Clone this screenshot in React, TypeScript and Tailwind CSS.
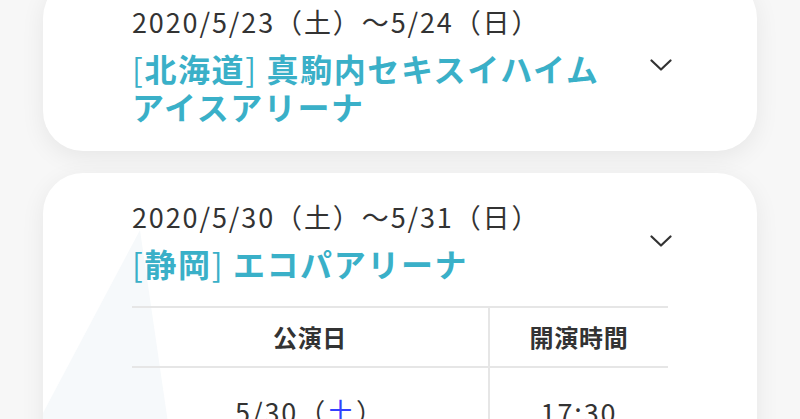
const FONT = "font-['Noto_Sans_CJK_JP','Noto_Sans',sans-serif]"

type Venue = {
  dates: string
  pref: string
  name: string
  rows?: { day: string; dow: string; time: string }[]
}

const VENUES: Venue[] = [
  { dates: '2020/5/23（土）〜5/24（日）', pref: '北海道', name: '真駒内セキスイハイムアイスアリーナ' },
  {
    dates: '2020/5/30（土）〜5/31（日）',
    pref: '静岡',
    name: 'エコパアリーナ',
    rows: [{ day: '5/30', dow: '土', time: '17:30' }],
  },
]

function Chevron() {
  return (
    <svg width="22" height="12" viewBox="0 0 22 12" fill="none" stroke="#333" strokeWidth="2.2" strokeLinecap="round" strokeLinejoin="round">
      <polyline points="1.5,1.5 11,10.5 20.5,1.5" />
    </svg>
  )
}

function VenueCard({ v }: { v: Venue }) {
  return (
    <div className="relative overflow-hidden rounded-[40px] bg-white pl-[89px] pr-[85px] pt-[26px] pb-[26px] shadow-[0_6px_24px_rgba(0,0,0,0.07)]">
      {/* faint watermark behind the table */}
      {v.rows && (
        <svg className="pointer-events-none absolute left-0 top-[50px]" width="200" height="300" viewBox="0 0 200 300">
          <polygon points="97,7 0,190 0,300 150,300 125,200" fill="#f6f9fb" />
        </svg>
      )}
      <div className="relative flex items-center">
        <div className="flex-1">
          <p className="text-[27px] leading-[36px] tracking-[0.07em] text-[#333]">{v.dates}</p>
          <p className="mt-[9px] text-[32px] font-bold leading-[38px] tracking-[0.05em] text-[#3ab0c8]">
            <span className="font-normal">[</span>
            {v.pref}
            <span className="font-normal">]</span> {v.name}
          </p>
        </div>
        <div className="ml-[28px] flex w-[22px] justify-center">
          <Chevron />
        </div>
      </div>
      {v.rows && (
        <table className="relative mt-[24px] w-[536px] border-collapse">
          <thead>
            <tr className="border-y-2 border-[#e6e6e6]">
              <th className="h-[60px] w-[357px] border-r-2 border-[#e6e6e6] text-[24px] font-bold tracking-[0.03em] text-[#333]">公演日</th>
              <th className="h-[60px] text-[24px] font-bold tracking-[0.03em] text-[#333]">開演時間</th>
            </tr>
          </thead>
          <tbody>
            {v.rows.map(r => (
              <tr key={r.day} className="border-b-2 border-[#e6e6e6]">
                <td className="h-[90px] border-r-2 border-[#e6e6e6] text-center text-[27px] tracking-[0.07em] text-[#333]">
                  {r.day}（<span className="text-[#3340ff]">{r.dow}</span>）
                </td>
                <td className="h-[90px] text-center text-[27px] tracking-[0.07em] text-[#333]">{r.time}</td>
              </tr>
            ))}
          </tbody>
        </table>
      )}
    </div>
  )
}

export default function App() {
  return (
    <div className={`${FONT} h-[419px] w-[800px] overflow-hidden bg-[#f7f7f7]`}>
      <div className="mt-[-22px] flex flex-col gap-[22px] px-[43px]">
        {VENUES.map(v => (
          <VenueCard key={v.pref} v={v} />
        ))}
      </div>
    </div>
  )
}
